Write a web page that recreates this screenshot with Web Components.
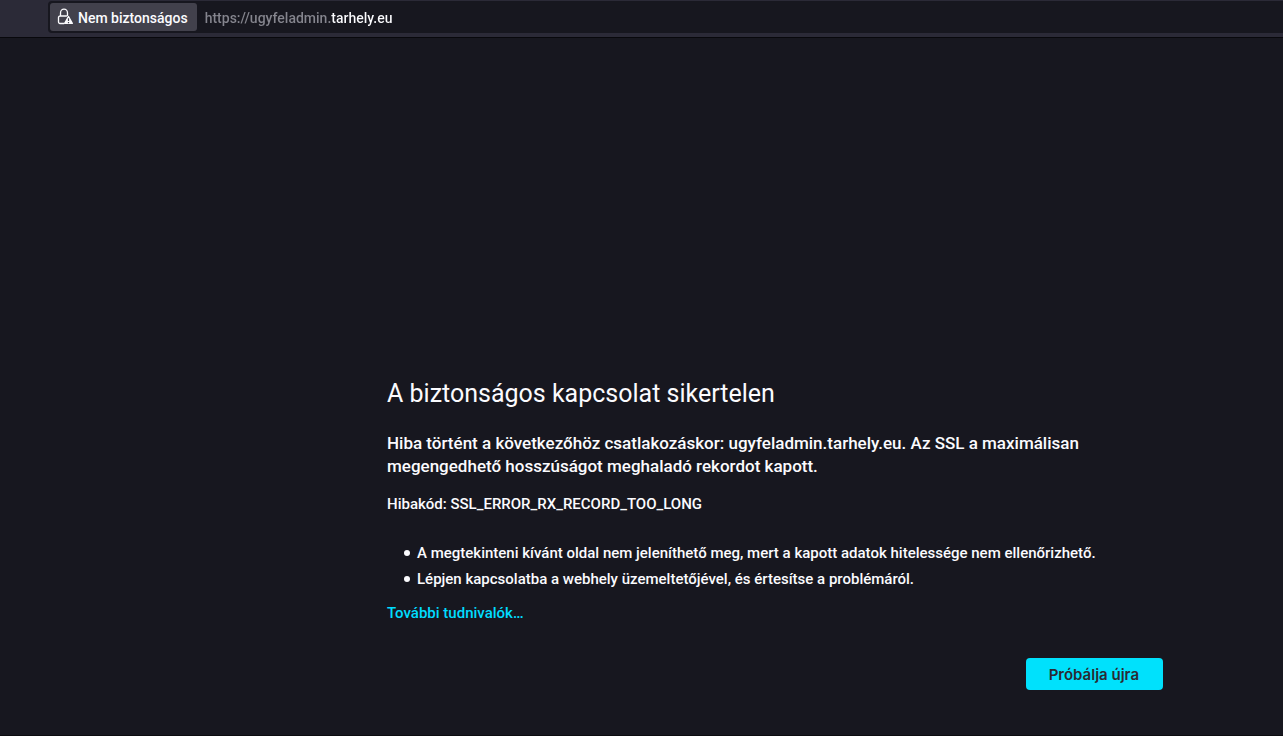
<!DOCTYPE html>
<html lang="hu">
<head>
<meta charset="utf-8">
<title>A biztonságos kapcsolat sikertelen</title>
<style>
html, body { height: 100%; }
body { margin: 0; background: #17171f; color: #fbfbfe; font-family: Roboto, "Liberation Sans", sans-serif; }
</style>
</head>
<body>
<browser-window>
  <address-bar slot="toolbar" label="Nem biztonságos" url="https://ugyfeladmin.tarhely.eu"></address-bar>
  <error-page>
    <span slot="title">A biztonságos kapcsolat sikertelen</span>
    <span slot="description">Hiba történt a következőhöz csatlakozáskor: ugyfeladmin.tarhely.eu. Az SSL a maximálisan megengedhető hosszúságot meghaladó rekordot kapott.</span>
    <span slot="code">Hibakód: SSL_ERROR_RX_RECORD_TOO_LONG</span>
    <span slot="hint-1">A megtekinteni kívánt oldal nem jeleníthető meg, mert a kapott adatok hitelessége nem ellenőrizhető.</span>
    <span slot="hint-2">Lépjen kapcsolatba a webhely üzemeltetőjével, és értesítse a problémáról.</span>
    <span slot="more">További tudnivalók…</span>
    <retry-button slot="action">Próbálja újra</retry-button>
  </error-page>
</browser-window>

<template id="browser-window">
  <style>
    :host { display: flex; flex-direction: column; min-height: 100%; box-sizing: border-box; border-bottom: 1px solid #0c0c10; }
    ::slotted(error-page) { flex: 1; }
  </style>
  <slot name="toolbar"></slot>
  <slot></slot>
</template>

<template id="address-bar">
  <style>
    :host { display: block; background: #2b2a37; padding: 1px 0 4px 48px; border-bottom: 1px solid #08080c; }
    .field { display: flex; align-items: center; gap: 8px; height: 32px; padding-left: 2px; background: #17171f; border-radius: 4px 0 0 4px; }
    .identity { display: flex; align-items: center; gap: 4px; height: 28px; padding: 0 9px 0 7px; border: 0; border-radius: 3px; background: #42414c; color: #fbfbfe; font: 500 14px/28px Roboto, "Liberation Sans", sans-serif; white-space: nowrap; }
    svg { width: 17px; height: 18px; flex: none; }
    input { flex: 1; min-width: 0; height: 28px; padding: 0; border: 0; outline: 0; color: #fbfbfe; font: 500 14px/28px Roboto, "Liberation Sans", sans-serif;
      background: linear-gradient(90deg, #85858e 126px, #fbfbfe 126px); background-clip: text; -webkit-background-clip: text; -webkit-text-fill-color: transparent; }
    span, input { padding-top: 2px; box-sizing: border-box; }
  </style>
  <div class="field">
    <button class="identity" type="button">
      <svg viewBox="0 0 17 18" fill="none" aria-hidden="true">
        <path d="M3.5 8V5a3.5 3.8 0 0 1 7 0v2.5M7 15.5H3a1.5 1.5 0 0 1-1.500-1.500V9.500A1.500 1.500 0 0 1 3 8h6.500" stroke="#fbfbfe" stroke-width="1.300" stroke-linecap="round"/>
        <path d="M11.500 8.500 15.300 15.300H7.700Z" fill="#fbfbfe" stroke="#fbfbfe" stroke-width="1.400" stroke-linejoin="round"/>
        <path d="M11.500 10.300v2.600M11.500 14v1.200" stroke="#42414c" stroke-width="1.200"/>
      </svg>
      <span></span>
    </button>
    <input type="url" aria-label="Webcím" spellcheck="false">
  </div>
</template>

<template id="error-page">
  <style>
    :host { display: flex; flex-direction: column; justify-content: flex-end; box-sizing: border-box; padding: 40px 120px 45px 387px; }
    h1 { margin: 0 0 23px; font-size: 25px; line-height: 30px; font-weight: 400; }
    p { margin: 0; font-size: 15px; line-height: 24px; font-weight: 500; }
    p.description { margin-bottom: 14px; font-size: 17px; line-height: 23px; }
    ul { margin: 24px 0 9px; padding: 0 0 0 17px; font-size: 15px; line-height: 26px; font-weight: 500; list-style: none; }
    li { display: flex; align-items: center; gap: 7px; }
    li::before { content: ""; flex: none; width: 6px; height: 6px; border-radius: 50%; background: currentColor; }
    a { color: #00ddff; text-decoration: none; }
    .actions { display: flex; justify-content: flex-end; margin-top: 33px; }
  </style>
  <h1><slot name="title"></slot></h1>
  <p class="description"><slot name="description"></slot></p>
  <p><slot name="code"></slot></p>
  <ul>
    <li><slot name="hint-1"></slot></li>
    <li><slot name="hint-2"></slot></li>
  </ul>
  <p><a href="#tudnivalok"><slot name="more"></slot></a></p>
  <div class="actions"><slot name="action"></slot></div>
</template>

<template id="retry-button">
  <style>
    :host { display: block; }
    button { display: block; height: 32px; padding: 2px 24px 0 23px; border: 0; border-radius: 4px; background: #00e1fc; color: #2b2a33; font: 600 15px/30px Inter, "Liberation Sans", sans-serif; }
  </style>
  <button type="button"><slot></slot></button>
</template>

<script>
class TemplateElement extends HTMLElement {
  constructor() {
    super();
    const template = document.getElementById(this.localName);
    this.attachShadow({ mode: "open" }).append(template.content.cloneNode(true));
  }
}
class AddressBar extends TemplateElement {
  connectedCallback() {
    this.shadowRoot.querySelector("span").textContent = this.getAttribute("label");
    this.shadowRoot.querySelector("input").value = this.getAttribute("url");
  }
}
customElements.define("browser-window", class extends TemplateElement {});
customElements.define("address-bar", AddressBar);
customElements.define("error-page", class extends TemplateElement {});
customElements.define("retry-button", class extends TemplateElement {});
</script>
</body>
</html>
